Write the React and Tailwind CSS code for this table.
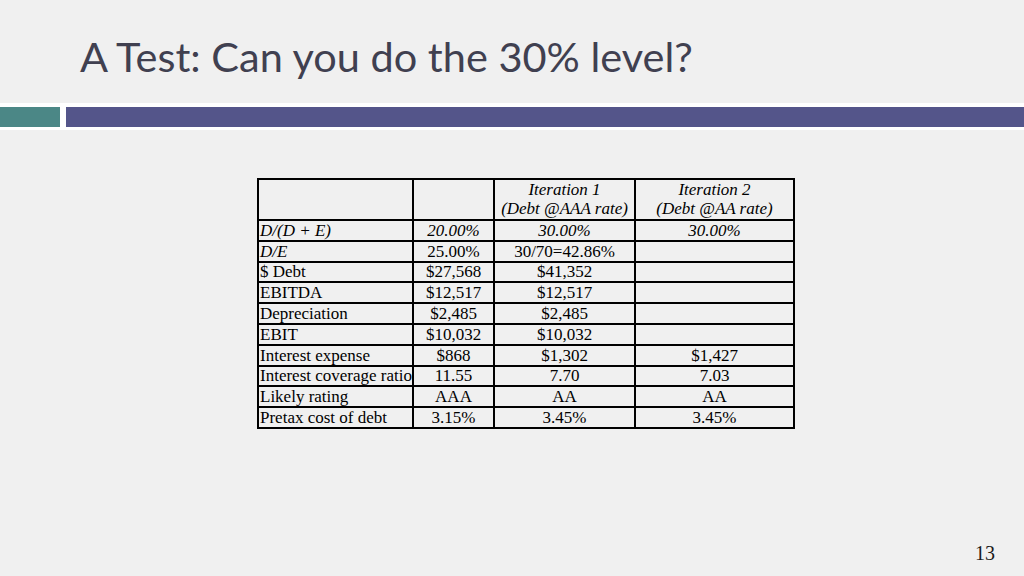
const rows = [
  { label: "D/(D + E)", labelItalic: true, a: "20.00%", b: "30.00%", c: "30.00%", valItalic: true },
  { label: "D/E", labelItalic: true, a: "25.00%", b: "30/70=42.86%", c: "" },
  { label: "$ Debt", a: "$27,568", b: "$41,352", c: "" },
  { label: "EBITDA", a: "$12,517", b: "$12,517", c: "" },
  { label: "Depreciation", a: "$2,485", b: "$2,485", c: "" },
  { label: "EBIT", a: "$10,032", b: "$10,032", c: "" },
  { label: "Interest expense", a: "$868", b: "$1,302", c: "$1,427" },
  { label: "Interest coverage ratio", a: "11.55", b: "7.70", c: "7.03" },
  { label: "Likely rating", a: "AAA", b: "AA", c: "AA" },
  { label: "Pretax cost of debt", a: "3.15%", b: "3.45%", c: "3.45%" },
];

export default function App() {
  return (
    <div className="w-[1024px] h-[576px] bg-[#f0f0f0] overflow-hidden flex flex-col">
      <div className="h-[103px] pl-[80px] pt-[32px]">
        <h1 className="text-[41.5px] leading-[48px] text-[#404050] whitespace-nowrap" style={{ fontFamily: "Lato, sans-serif" }}>
          A Test: Can you do the 30% level?
        </h1>
      </div>
      <div className="h-[27px] bg-white flex items-center gap-[6px]">
        <div className="w-[60px] h-[20px] bg-[#4b8786]"></div>
        <div className="flex-1 h-[20px] bg-[#54558a]"></div>
      </div>

      <div className="pl-[257px] pt-[48px]">
        <table
          className="border-collapse border-2 border-black text-[17px] leading-[17px] text-black table-fixed w-[536px]"
          style={{ fontFamily: '"Liberation Serif", serif' }}
        >
          <colgroup>
            <col className="w-[155px]" />
            <col className="w-[81px]" />
            <col className="w-[141px]" />
            <col className="w-[159px]" />
          </colgroup>
          <tbody>
            <tr className="h-[41px]">
              <td className="border-2 border-black"></td>
              <td className="border-2 border-black"></td>
              <td className="border-2 border-black text-center italic align-top leading-[19px]">
                Iteration 1<br />(Debt @AAA rate)
              </td>
              <td className="border-2 border-black text-center italic align-top leading-[19px]">
                Iteration 2<br />(Debt @AA rate)
              </td>
            </tr>
            {rows.map((r, i) => (
              <tr key={i} className="h-[20.8px]">
                <td className={"border-2 border-black pl-[1px] p-0 whitespace-nowrap overflow-hidden " + (r.labelItalic ? "italic" : "")}>
                  {r.label}
                </td>
                <td className={"border-2 border-black p-0 text-center whitespace-nowrap " + (r.valItalic ? "italic" : "")}>{r.a}</td>
                <td className={"border-2 border-black p-0 text-center whitespace-nowrap " + (r.valItalic ? "italic" : "")}>{r.b}</td>
                <td className={"border-2 border-black p-0 text-center whitespace-nowrap " + (r.valItalic ? "italic" : "")}>{r.c}</td>
              </tr>
            ))}
          </tbody>
        </table>
      </div>

      <div className="flex-1"></div>
      <div className="flex justify-end pr-[29px] pb-[8px]">
        <span className="text-[20px] text-[#1a1a1a]" style={{ fontFamily: '"Liberation Serif", serif' }}>13</span>
      </div>
    </div>
  );
}
